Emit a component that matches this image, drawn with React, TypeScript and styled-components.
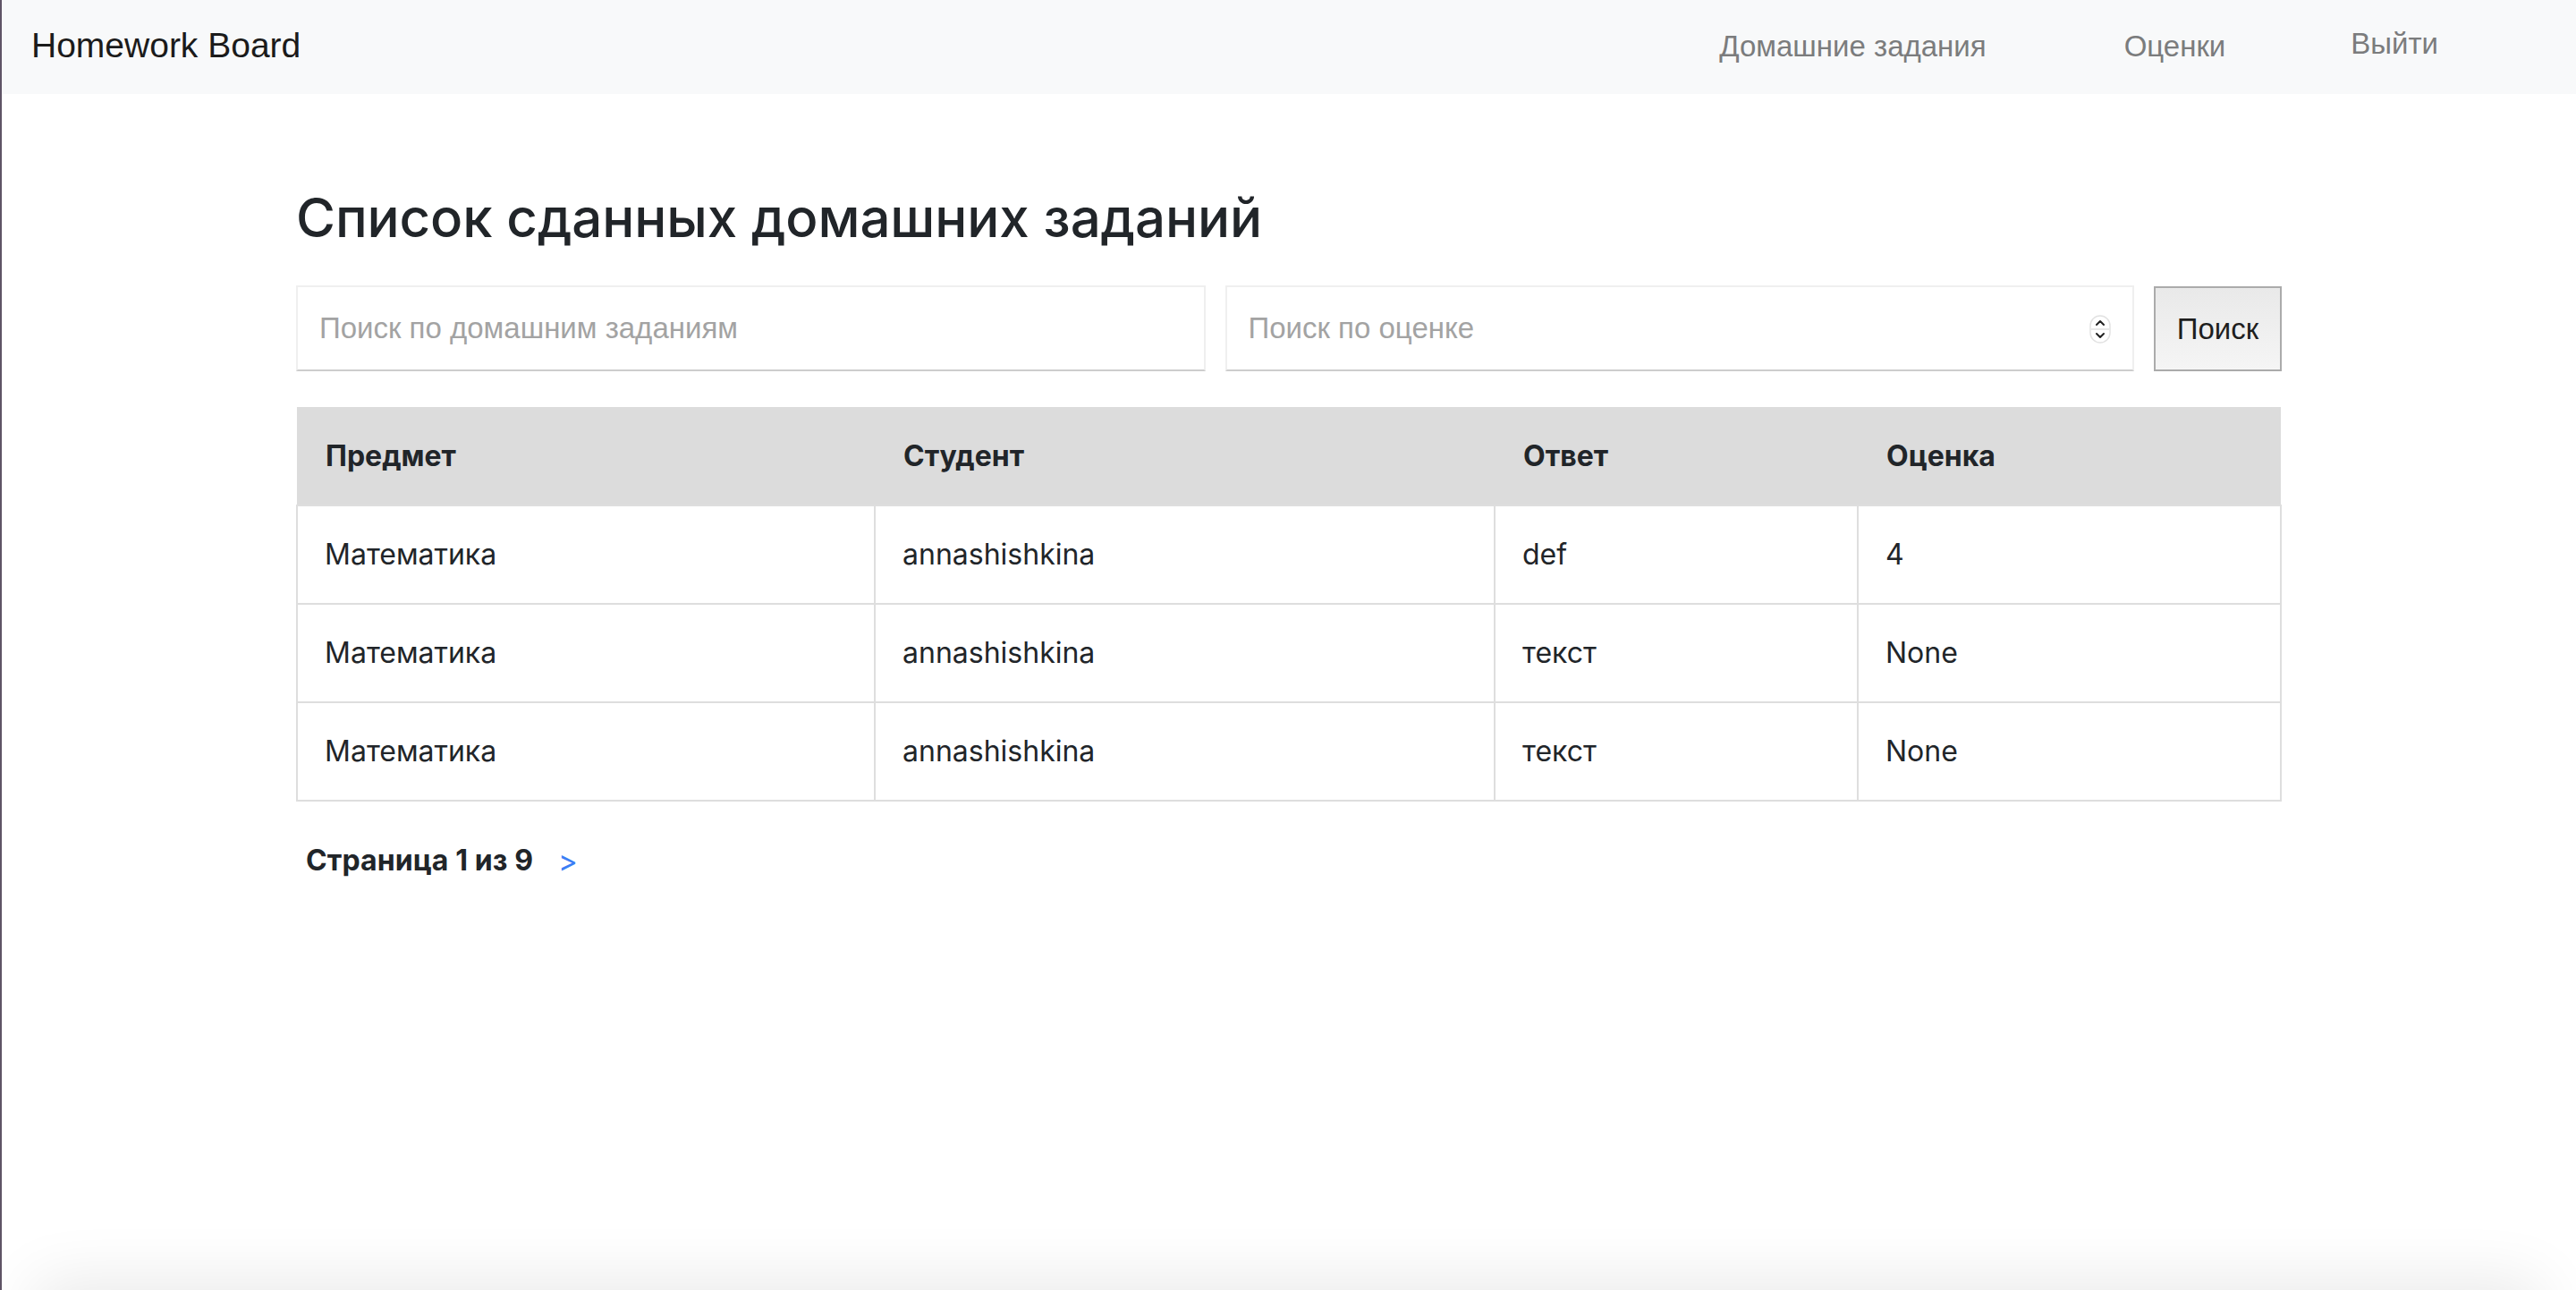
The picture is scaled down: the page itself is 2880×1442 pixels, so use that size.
import React from "react";
import styled, {createGlobalStyle} from "styled-components";

const GlobalStyle = createGlobalStyle`
    html, body {
        margin: 0;
        padding: 0;
        background: #ffffff;
    }
    body {
        font-family: Inter, "Noto Sans", sans-serif;
        color: #212529;
        border-left: 2px solid #5f5466;
        min-height: 100vh;
        box-sizing: border-box;
        overflow: hidden;
    }
    * {
        box-sizing: border-box;
    }
`

const Navbar = styled.nav`
    display: flex;
    align-items: center;
    justify-content: space-between;
    height: 105px;
    padding: 0 154px 2px 33px;
    background: #f8f9fa;
`

const Brand = styled.a`
    font-family: "Liberation Sans", Arial, sans-serif;
    font-size: 39px;
    color: #1b1b1b;
    text-decoration: none;
    padding-bottom: 2px;
`

const NavList = styled.div`
    display: flex;
    align-items: center;
`

const NavLink = styled.a<{$gap: number; $lift?: boolean}>`
    font-family: "Liberation Sans", Arial, sans-serif;
    font-size: 33px;
    color: #7b7c7d;
    text-decoration: none;
    margin-left: ${p => p.$gap}px;
    padding-bottom: ${p => (p.$lift ? 5 : 0)}px;
`

const Container = styled.main`
    width: 2220px;
    margin: 0 auto;
    padding-top: 100px;
`

const Title = styled.h2`
    margin: 0 0 38px;
    font-size: 60px;
    font-weight: 500;
    line-height: 76px;
    letter-spacing: -0.1px;
    color: #212529;
`

const SearchRow = styled.form`
    display: flex;
    gap: 22px;
    margin-bottom: 40px;
`

const FieldWrap = styled.div`
    position: relative;
    flex: 1;
`

const Field = styled.input`
    width: 100%;
    height: 96px;
    padding: 0 24px;
    border: 2px solid #efefef;
    border-bottom-color: #cdcdcd;
    border-radius: 0;
    background: #ffffff;
    font-family: "Liberation Sans", Arial, sans-serif;
    font-size: 33px;
    color: #333;
    outline: none;

    &::placeholder {
        color: #a3a3a3;
    }

    &::-webkit-outer-spin-button,
    &::-webkit-inner-spin-button {
        -webkit-appearance: none;
        margin: 0;
    }
`

const Spinner = styled.svg`
    position: absolute;
    right: 26px;
    top: 33px;
    width: 24px;
    height: 32px;
    pointer-events: none;
`

const SearchButton = styled.button`
    width: 143px;
    height: 95px;
    margin-top: 1px;
    border: 2px solid #ababab;
    background: linear-gradient(#e9e9e9, #f5f5f5);
    font-family: "Liberation Sans", Arial, sans-serif;
    font-size: 33px;
    color: #1e1e1e;
    padding: 0;
    cursor: pointer;
`

const Table = styled.table`
    width: 100%;
    border-collapse: collapse;
    table-layout: fixed;
    font-size: 32px;
    color: #212529;
`

const HeadCell = styled.th`
    height: 110px;
    padding: 0 32px;
    background: #dcdcdc;
    text-align: left;
    font-weight: 700;
`

const Cell = styled.td`
    height: 110px;
    padding: 0 30px;
    border: 2px solid #dedede;
    line-height: 48px;
`

const Pager = styled.div`
    display: flex;
    align-items: center;
    gap: 28px;
    margin-top: 42px;
    padding-left: 11px;
    font-size: 32px;
    line-height: 48px;
`

const PageLabel = styled.span`
    font-weight: 700;
    letter-spacing: 0.1px;
    color: #212529;
`

const PageNext = styled.a`
    color: #3b7ff5;
    text-decoration: none;
    font-size: 33px;
`

const BottomShade = styled.div`
    position: fixed;
    left: 50px;
    right: 50px;
    bottom: -120px;
    height: 120px;
    box-shadow: 0 0 70px 10px rgba(0, 0, 0, 0.09);
    pointer-events: none;
`

const rows = [
    {subject: "Математика", student: "annashishkina", answer: "def", grade: "4"},
    {subject: "Математика", student: "annashishkina", answer: "текст", grade: "None"},
    {subject: "Математика", student: "annashishkina", answer: "текст", grade: "None"},
];

export default function App() {
    return (
        <>
            <GlobalStyle/>
            <Navbar>
                <Brand href="#">Homework Board</Brand>
                <NavList>
                    <NavLink href="#" $gap={0}>Домашние задания</NavLink>
                    <NavLink href="#" $gap={154}>Оценки</NavLink>
                    <NavLink href="#" $gap={140} $lift>Выйти</NavLink>
                </NavList>
            </Navbar>
            <Container>
                <Title>Список сданных домашних заданий</Title>
                <SearchRow onSubmit={e => e.preventDefault()}>
                    <FieldWrap>
                        <Field type="text" placeholder="Поиск по домашним заданиям"/>
                    </FieldWrap>
                    <FieldWrap>
                        <Field type="number" placeholder="Поиск по оценке"/>
                        <Spinner viewBox="0 0 24 32">
                            <rect x="1" y="1" width="22" height="30" rx="11" fill="#fff" stroke="#e2e2e2" strokeWidth="1.5"/>
                            <line x1="2" y1="16" x2="22" y2="16" stroke="#e2e2e2" strokeWidth="1.5"/>
                            <path d="M8 11 L12 7 L16 11" fill="none" stroke="#222" strokeWidth="2" strokeLinecap="round" strokeLinejoin="round"/>
                            <path d="M8 21 L12 25 L16 21" fill="none" stroke="#222" strokeWidth="2" strokeLinecap="round" strokeLinejoin="round"/>
                        </Spinner>
                    </FieldWrap>
                    <SearchButton type="submit">Поиск</SearchButton>
                </SearchRow>
                <Table>
                    <colgroup>
                        <col style={{width: "646px"}}/>
                        <col style={{width: "693px"}}/>
                        <col style={{width: "406px"}}/>
                        <col/>
                    </colgroup>
                    <thead>
                        <tr>
                            <HeadCell>Предмет</HeadCell>
                            <HeadCell>Студент</HeadCell>
                            <HeadCell>Ответ</HeadCell>
                            <HeadCell>Оценка</HeadCell>
                        </tr>
                    </thead>
                    <tbody>
                        {rows.map((r, i) => (
                            <tr key={i}>
                                <Cell>{r.subject}</Cell>
                                <Cell>{r.student}</Cell>
                                <Cell>{r.answer}</Cell>
                                <Cell>{r.grade}</Cell>
                            </tr>
                        ))}
                    </tbody>
                </Table>
                <Pager>
                    <PageLabel>Страница 1 из 9</PageLabel>
                    <PageNext href="#">&gt;</PageNext>
                </Pager>
            </Container>
            <BottomShade/>
        </>
    );
}
